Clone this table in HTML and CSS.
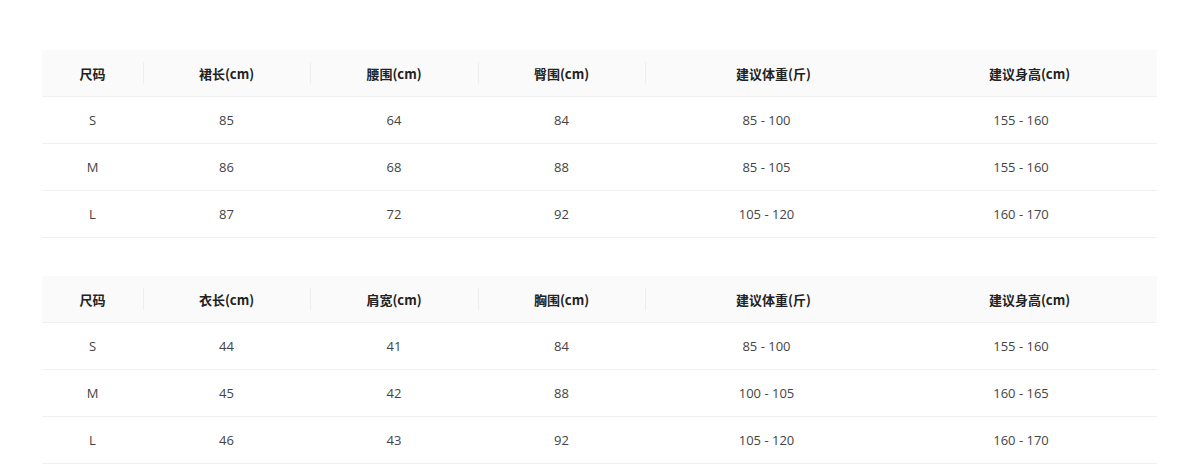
FILE: index.html
```html
<!DOCTYPE html>
<html lang="zh">
<head>
<meta charset="utf-8">
<link rel="stylesheet" href="styles.css">
</head>
<body>
<div class="page">
  <table class="size-table">
    <colgroup>
      <col class="c1"><col class="c2"><col class="c3"><col class="c4"><col class="c5"><col class="c6">
    </colgroup>
    <thead>
      <tr>
        <th>尺码</th><th class="div">裙长(cm)</th><th class="div">腰围(cm)</th><th class="div">臀围(cm)</th><th class="div">建议体重(斤)</th><th>建议身高(cm)</th>
      </tr>
    </thead>
    <tbody>
      <tr><td>S</td><td>85</td><td>64</td><td>84</td><td class="r5">85 - 100</td><td class="r6">155 - 160</td></tr>
      <tr><td>M</td><td>86</td><td>68</td><td>88</td><td class="r5">85 - 105</td><td class="r6">155 - 160</td></tr>
      <tr><td>L</td><td>87</td><td>72</td><td>92</td><td class="r5">105 - 120</td><td class="r6">160 - 170</td></tr>
    </tbody>
  </table>
  <table class="size-table">
    <colgroup>
      <col class="c1"><col class="c2"><col class="c3"><col class="c4"><col class="c5"><col class="c6">
    </colgroup>
    <thead>
      <tr>
        <th>尺码</th><th class="div">衣长(cm)</th><th class="div">肩宽(cm)</th><th class="div">胸围(cm)</th><th class="div">建议体重(斤)</th><th>建议身高(cm)</th>
      </tr>
    </thead>
    <tbody>
      <tr><td>S</td><td>44</td><td>41</td><td>84</td><td class="r5">85 - 100</td><td class="r6">155 - 160</td></tr>
      <tr><td>M</td><td>45</td><td>42</td><td>88</td><td class="r5">100 - 105</td><td class="r6">160 - 165</td></tr>
      <tr><td>L</td><td>46</td><td>43</td><td>92</td><td class="r5">105 - 120</td><td class="r6">160 - 170</td></tr>
    </tbody>
  </table>
</div>
</body>
</html>
```
FILE: styles.css
```css
html, body {
  margin: 0;
  padding: 0;
  background: #fff;
}
body {
  font-family: "Open Sans", "Noto Sans CJK SC", sans-serif;
  font-size: 13px;
  color: #444;
}
.page {
  padding: 50px 42px 0 42px;
  display: flex;
  flex-direction: column;
  gap: 38px;
}
.size-table {
  width: 1115px;
  border-collapse: collapse;
  table-layout: fixed;
}
.c1 { width: 101px; }
.c2 { width: 167px; }
.c3 { width: 168px; }
.c4 { width: 167px; }
.c5 { width: 257px; }
.c6 { width: 255px; }
.size-table th {
  height: 46px;
  padding: 0;
  background: #fafafa;
  border-bottom: 1px solid #f0f0f0;
  font-family: "Noto Sans CJK SC", sans-serif;
  font-weight: 700;
  font-size: 13px;
  color: #222;
  text-align: center;
  position: relative;
}
.size-table th.div::before {
  content: "";
  position: absolute;
  left: 0;
  top: 50%;
  width: 1px;
  height: 22px;
  transform: translateY(-50%);
  background: #eeeeee;
}
.size-table td {
  height: 46px;
  padding: 0;
  border-bottom: 1px solid #f0f0f0;
  text-align: center;
  color: #444;
}
.size-table td.r5 { padding-right: 14px; }
.size-table td.r6 { padding-right: 17px; }
```
